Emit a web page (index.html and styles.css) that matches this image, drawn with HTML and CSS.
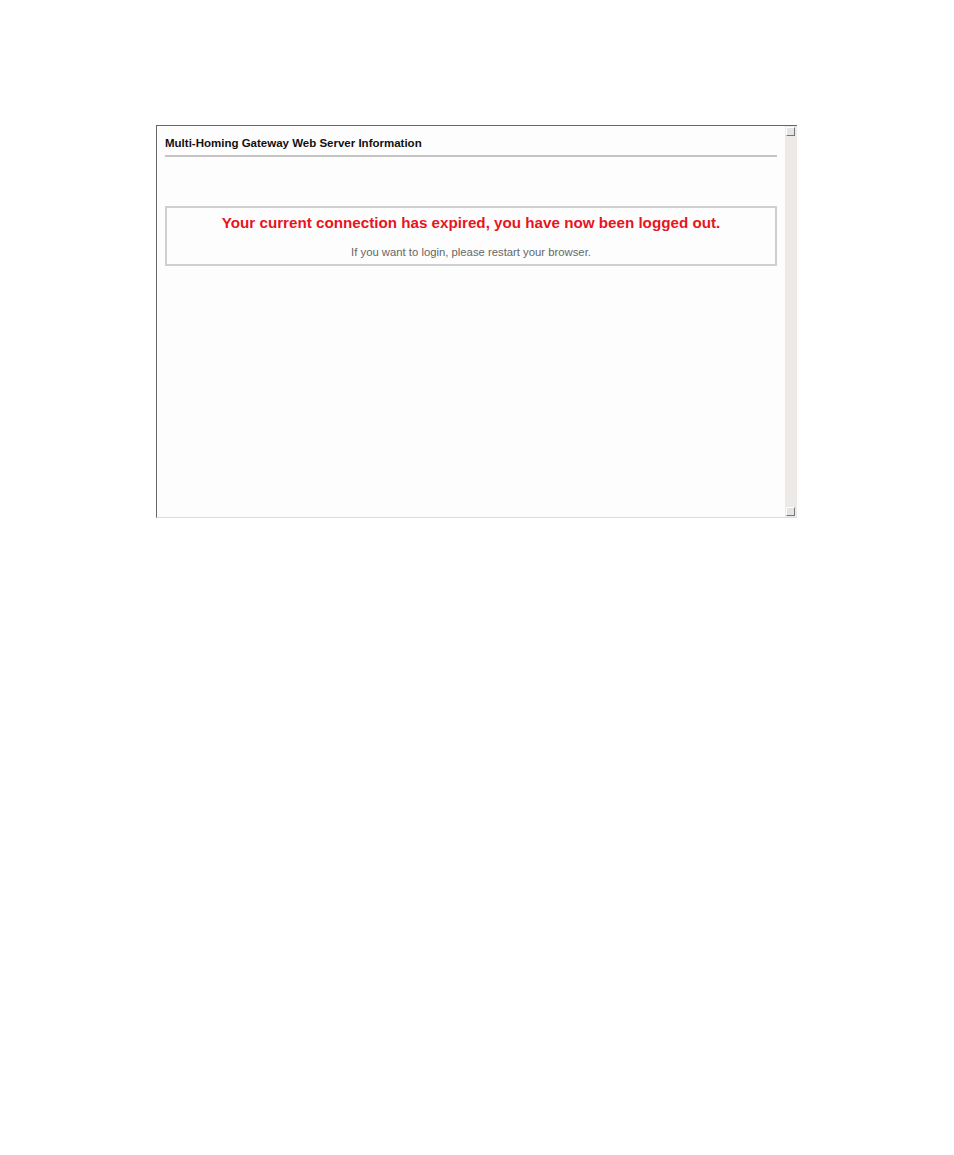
FILE: index.html
```html
<!DOCTYPE html>
<html>
<head>
<meta charset="utf-8">
<link rel="stylesheet" href="styles.css">
</head>
<body>
<div class="page">
  <div class="frame">
    <div class="content">
      <div class="title">Multi-Homing Gateway Web Server Information</div>
      <div class="rule"></div>
      <div class="box">
        <div class="msg">Your current connection has expired, you have now been logged out.</div>
        <div class="sub">If you want to login, please restart your browser.</div>
      </div>
    </div>
    <div class="scrollbar">
      <div class="arrow"></div>
      <div class="arrow"></div>
    </div>
  </div>
</div>
</body>
</html>
```
FILE: styles.css
```css
html, body { margin: 0; padding: 0; background: #fff; }
body { font-family: "Liberation Sans", Arial, sans-serif; }
.page { padding: 125px 0 0 156px; }
.frame {
  width: 640px;
  height: 391px;
  border-top: 1px solid #666;
  border-left: 1px solid #666;
  border-bottom: 1px solid #ddd;
  display: flex;
  background: #fdfdfd;
}
.content { flex: 1; padding: 0 8px; }
.title {
  font-size: 11.5px;
  font-weight: bold;
  color: #111;
  margin-top: 11px;
  line-height: 13px;
}
.rule { height: 2px; background: #c4c4c4; margin-top: 5px; }
.box {
  margin-top: 49px;
  height: 56px;
  border: 2px solid #d0d0d0;
  text-align: center;
}
.msg {
  color: #e8141e;
  font-size: 15.2px;
  font-weight: bold;
  margin-top: 6px;
  line-height: 18px;
}
.sub {
  color: #666;
  font-size: 11.3px;
  margin-top: 14px;
  line-height: 13px;
}
.scrollbar {
  width: 12px;
  background: #ece9e6;
  display: flex;
  flex-direction: column;
  justify-content: space-between;
}
.arrow {
  width: 9px;
  height: 9px;
  margin: 1px;
  background: #e4e4e4;
  border-right: 1px solid #777;
  border-bottom: 1px solid #777;
  border-top: 1px solid #fff;
  border-left: 1px solid #fff;
  box-sizing: border-box;
}
```
